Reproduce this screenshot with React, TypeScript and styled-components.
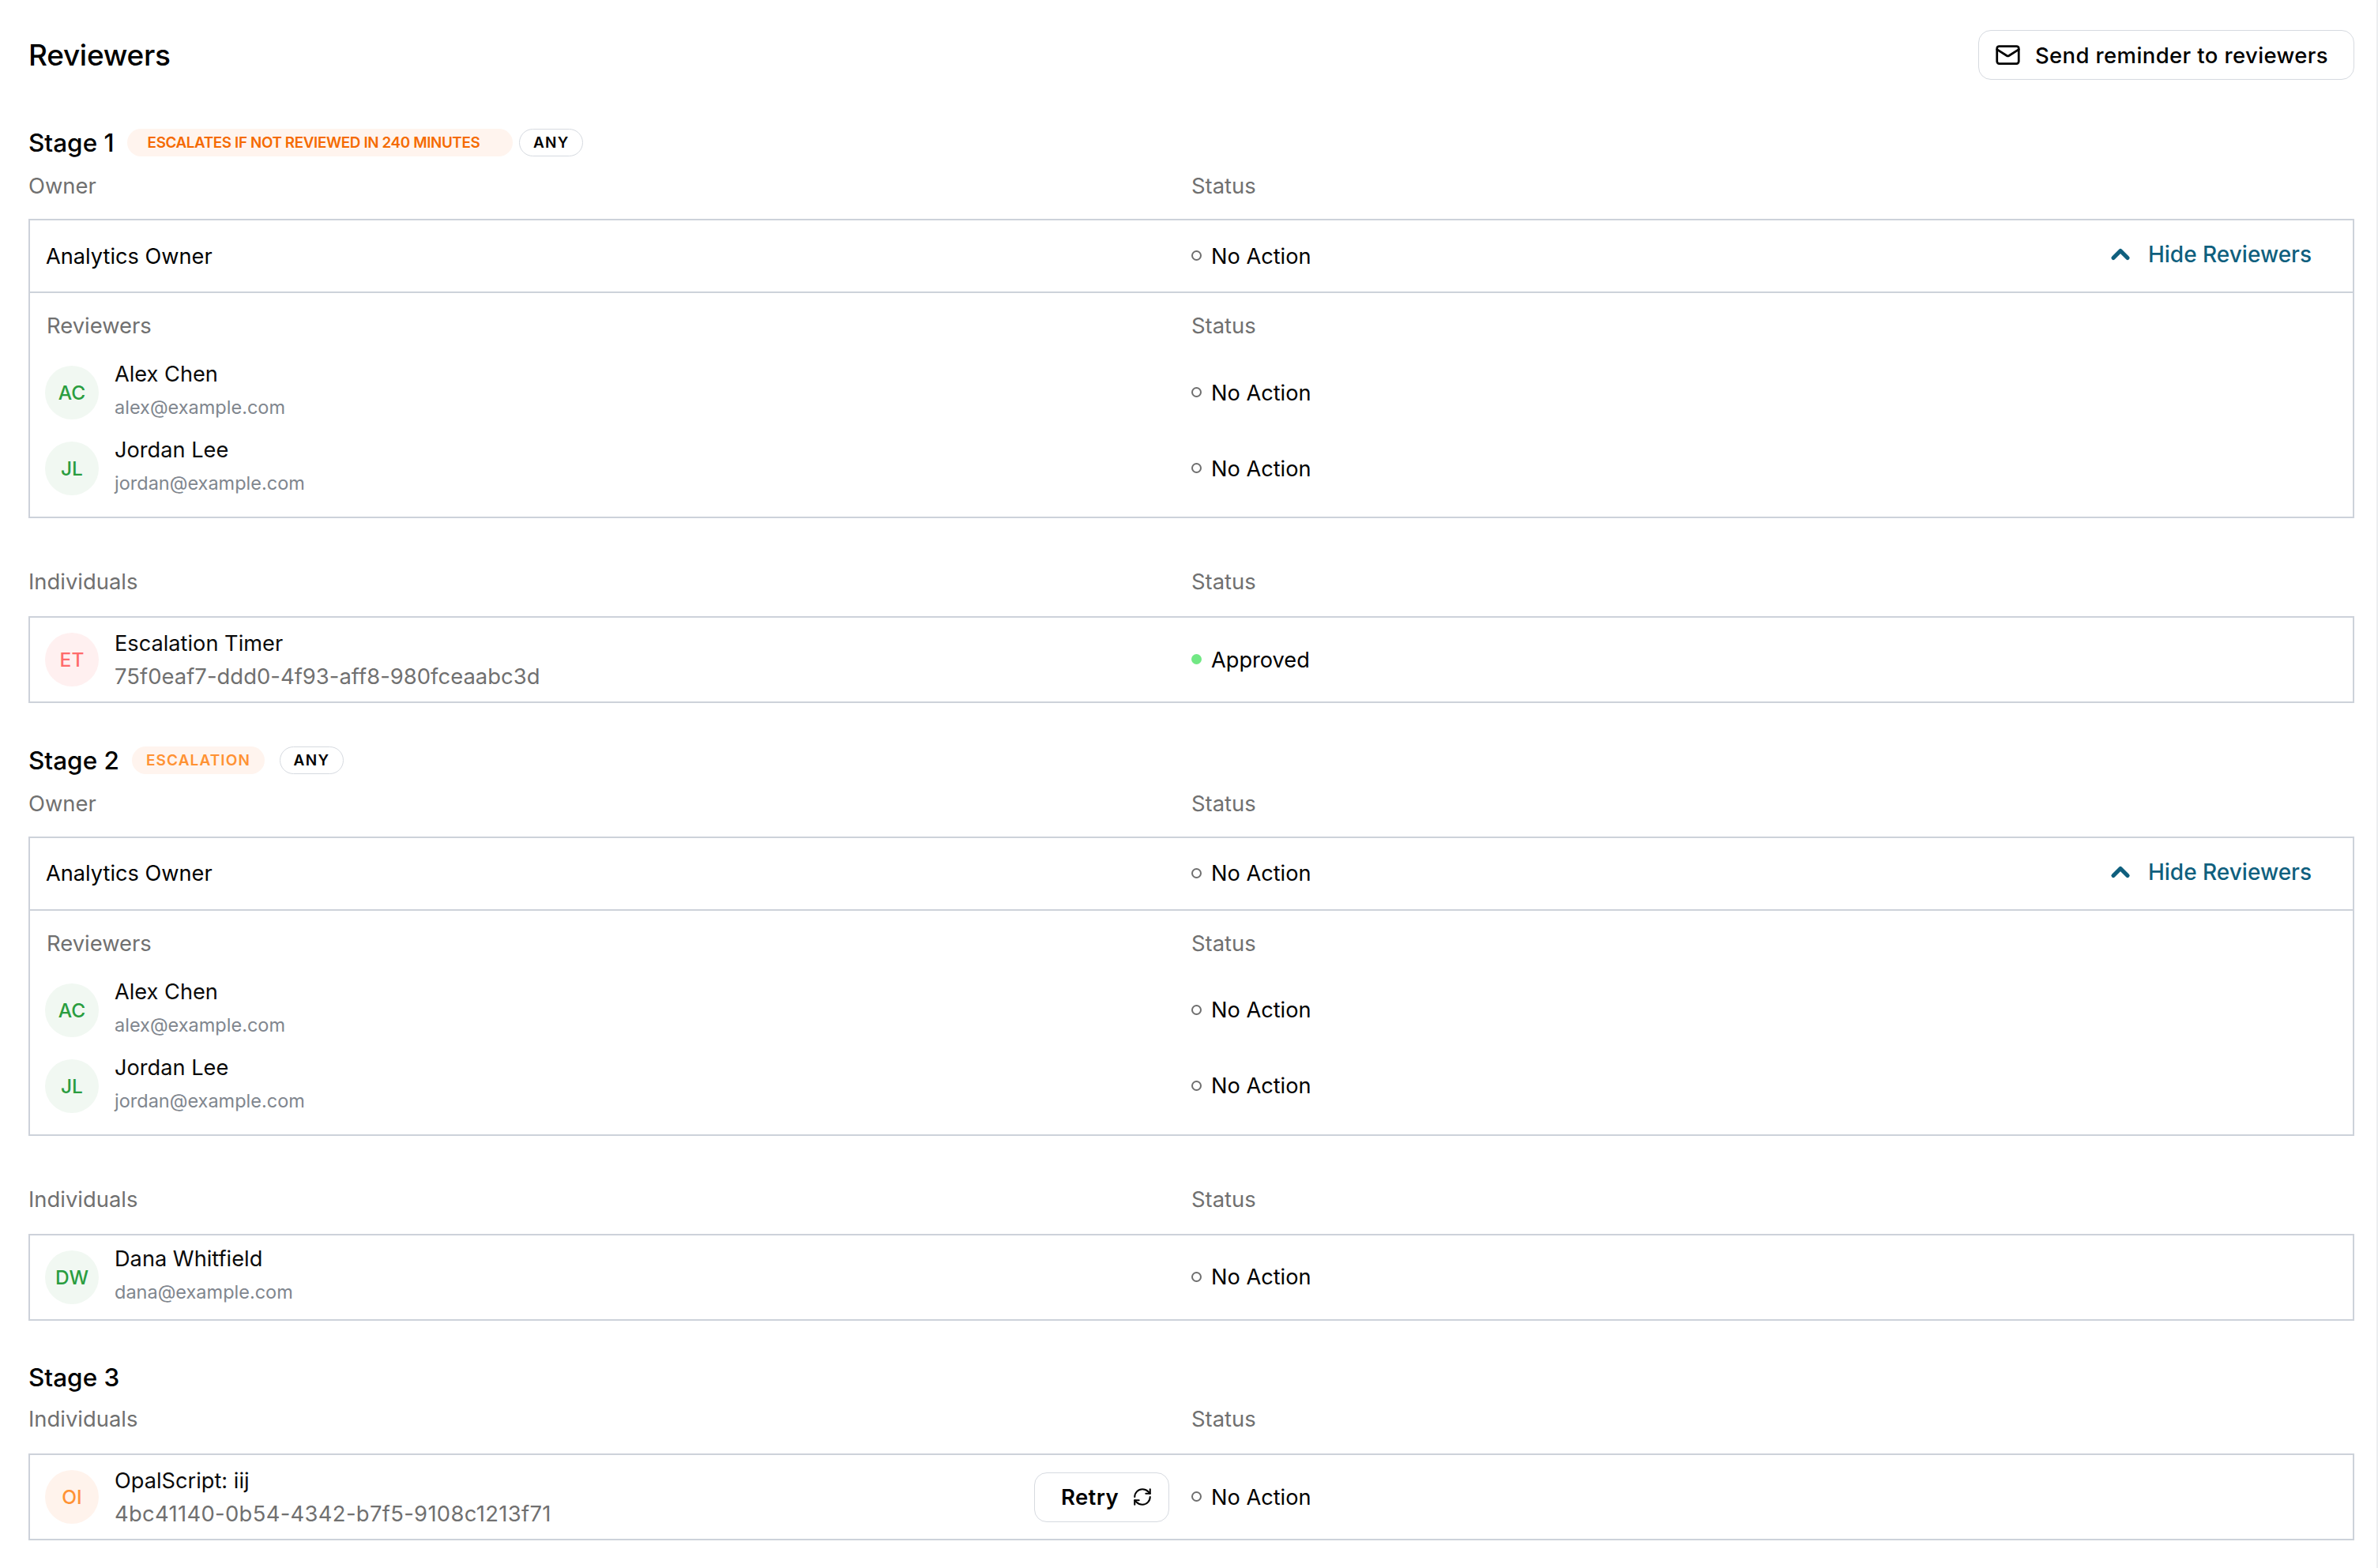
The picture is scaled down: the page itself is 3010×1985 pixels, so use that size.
import styled, { createGlobalStyle } from 'styled-components'
import { Mail, ChevronUp, RefreshCw } from 'lucide-react'

const GlobalStyle = createGlobalStyle`
  html, body { margin: 0; padding: 0; background: #fff; }
  body { font-family: Inter, "Liberation Sans", sans-serif; color: #0a0a0a; }
  * { box-sizing: border-box; }
`

const Page = styled.div`
  width: 3010px;
  height: 1985px;
  padding: 38px 28px 0 36px;
  border-right: 2px solid #eceef0;
  overflow: hidden;
`

const TopBar = styled.div`
  display: flex;
  align-items: center;
  justify-content: space-between;
  height: 63px;
  margin-bottom: 62px;
`

const Title = styled.h1`
  margin: 0;
  font-size: 37px;
  font-weight: 500;
  letter-spacing: -0.3px;
  color: #000;
`

const OutlineButton = styled.button`
  display: inline-flex;
  align-items: center;
  height: 63px;
  border: 1.5px solid #d6dae0;
  border-radius: 16px;
  background: #fff;
  color: #000;
  font-family: inherit;
  font-size: 27.5px;
  font-weight: 500;
  letter-spacing: 0.38px;
`

const SendButton = styled(OutlineButton)`
  gap: 18px;
  padding: 0 32px 0 20px;
`

const RetryButton = styled(OutlineButton)`
  gap: 17px;
  padding: 0 20px 0 33px;
  font-weight: 600;
`

const Stage = styled.section`
  margin-bottom: 54.5px;
`

const StageHead = styled.div`
  display: flex;
  align-items: center;
  height: 35px;
  margin-bottom: 21px;
`

const StageName = styled.h2`
  margin: 0 16px 0 0;
  font-size: 31.5px;
  font-weight: 500;
  color: #000;
`

const Pill = styled.span<{ $tone: 'deep' | 'soft' }>`
  display: inline-flex;
  align-items: center;
  height: 35px;
  border-radius: 18px;
  background: #fff4ee;
  font-weight: 600;
  font-size: ${p => (p.$tone === 'deep' ? '18.8px' : '19px')};
  margin-right: ${p => (p.$tone === 'deep' ? '8px' : '19px')};
  padding: ${p => (p.$tone === 'deep' ? '0 42px 0 26px' : '0 18px')};
  color: ${p => (p.$tone === 'deep' ? '#f56a00' : '#ff9233')};
  letter-spacing: ${p => (p.$tone === 'deep' ? '-0.35px' : '1.1px')};
`

const AnyPill = styled.span`
  display: inline-flex;
  align-items: center;
  justify-content: center;
  width: 81px;
  height: 35px;
  border: 1.5px solid #d6dae0;
  border-radius: 18px;
  font-size: 19px;
  font-weight: 600;
  letter-spacing: 1.3px;
  color: #000;
`

const Columns = styled.div<{ $gap: number }>`
  display: grid;
  grid-template-columns: 1472px 1fr;
  height: 34px;
  margin-bottom: ${p => p.$gap}px;
  font-size: 27.4px;
  line-height: 32px;
  color: #707070;
`

const Group = styled.div<{ $flush?: boolean }>`
  margin-top: ${p => (p.$flush ? '-2px' : '64px')};
`

const Box = styled.div`
  border: 2px solid #cdd2da;
`

const OwnerRow = styled.div`
  display: grid;
  grid-template-columns: 1470px 1fr;
  align-items: center;
  height: 92px;
  border-bottom: 2px solid #cdd2da;
`

const OwnerName = styled.div`
  padding-left: 20px;
  font-size: 27.2px;
  color: #000;
`

const StatusCell = styled.div`
  display: flex;
  align-items: center;
  justify-content: space-between;
  padding-right: 52px;
`

const Status = styled.div`
  display: flex;
  align-items: center;
  gap: 12px;
  font-size: 27.2px;
  color: #000;
`

const Dot = styled.span<{ $approved?: boolean }>`
  width: 13px;
  height: 13px;
  border-radius: 50%;
  margin-top: -1px;
  border: ${p => (p.$approved ? 'none' : '2.5px solid #6f6f6f')};
  background: ${p => (p.$approved ? '#71e884' : '#fff')};
`

const HideLink = styled.a`
  display: flex;
  align-items: center;
  gap: 17px;
  margin-top: -4px;
  font-size: 28px;
  font-weight: 500;
  color: #0f5f7e;
`

const ReviewerBlock = styled.div`
  padding: 25px 0 13px;
`

const ReviewerHead = styled.div`
  display: grid;
  grid-template-columns: 1470px 1fr;
  height: 34px;
  margin-bottom: 19px;
  font-size: 27.4px;
  line-height: 32px;
  color: #707070;

  & > :first-child {
    padding-left: 21px;
  }
`

const PersonRow = styled.div<{ $height: number }>`
  display: grid;
  grid-template-columns: 1470px 1fr;
  align-items: center;
  height: ${p => p.$height}px;
`

const PersonCell = styled.div`
  display: flex;
  align-items: center;
  padding: 0 28px 0 19px;
`

const Avatar = styled.div<{ $tone: 'green' | 'red' | 'orange' }>`
  display: flex;
  align-items: center;
  justify-content: center;
  flex: none;
  width: 68px;
  height: 68px;
  margin-right: 20px;
  border-radius: 50%;
  font-size: 24.5px;
  font-weight: 500;
  background: ${p => ({ green: '#f1f8f2', red: '#fff0f0', orange: '#fff3ec' }[p.$tone])};
  color: ${p => ({ green: '#2a9d3f', red: '#ff6b6b', orange: '#ff9233' }[p.$tone])};
`

const PersonText = styled.div`
  display: flex;
  flex-direction: column;
  flex: 1;
`

const PersonName = styled.div`
  font-size: 27.2px;
  line-height: 34px;
  color: #0a0a0a;
`

const Sub = styled.div<{ $id?: boolean; $tracking?: number }>`
  line-height: 34px;
  font-size: ${p => (p.$id ? '27.4px' : '23.5px')};
  letter-spacing: ${p => p.$tracking ?? 0}px;
  color: ${p => (p.$id ? '#707070' : '#80868e')};
  margin-top: ${p => (p.$id ? '7px' : '8px')};
  padding-bottom: ${p => (p.$id ? '0' : '4px')};
`

type Person = {
  initials: string
  tone: 'green' | 'red' | 'orange'
  name: string
  sub: string
  isId?: boolean
  tracking?: number
  approved?: boolean
  retry?: boolean
}

type StageData = {
  name: string
  pill?: { text: string; tone: 'deep' | 'soft' }
  owner?: boolean
  individual: Person
}

const reviewers: Person[] = [
  { initials: 'AC', tone: 'green', name: 'Alex Chen', sub: 'alex@example.com' },
  { initials: 'JL', tone: 'green', name: 'Jordan Lee', sub: 'jordan@example.com' },
]

const stages: StageData[] = [
  {
    name: 'Stage 1',
    pill: { text: 'ESCALATES IF NOT REVIEWED IN 240 MINUTES', tone: 'deep' },
    owner: true,
    individual: {
      initials: 'ET',
      tone: 'red',
      name: 'Escalation Timer',
      sub: '75f0eaf7-ddd0-4f93-aff8-980fceaabc3d',
      isId: true,
      tracking: 0.04,
      approved: true,
    },
  },
  {
    name: 'Stage 2',
    pill: { text: 'ESCALATION', tone: 'soft' },
    owner: true,
    individual: { initials: 'DW', tone: 'green', name: 'Dana Whitfield', sub: 'dana@example.com' },
  },
  {
    name: 'Stage 3',
    individual: {
      initials: 'OI',
      tone: 'orange',
      name: 'OpalScript: iij',
      sub: '4bc41140-0b54-4342-b7f5-9108c1213f71',
      isId: true,
      tracking: 0.32,
      retry: true,
    },
  },
]

const PersonLine = ({ person, height }: { person: Person; height: number }) => (
  <PersonRow $height={height}>
    <PersonCell>
      <Avatar $tone={person.tone}>{person.initials}</Avatar>
      <PersonText>
        <PersonName>{person.name}</PersonName>
        <Sub $id={person.isId} $tracking={person.tracking}>
          {person.sub}
        </Sub>
      </PersonText>
      {person.retry && (
        <RetryButton>
          Retry
          <RefreshCw size={26} strokeWidth={1.9} />
        </RetryButton>
      )}
    </PersonCell>
    <Status>
      <Dot $approved={person.approved} />
      {person.approved ? 'Approved' : 'No Action'}
    </Status>
  </PersonRow>
)

const App = () => (
  <Page>
    <GlobalStyle />
    <TopBar>
      <Title>Reviewers</Title>
      <SendButton>
        <Mail size={33} strokeWidth={2} />
        Send reminder to reviewers
      </SendButton>
    </TopBar>

    {stages.map(stage => (
      <Stage key={stage.name}>
        <StageHead>
          <StageName>{stage.name}</StageName>
          {stage.pill && <Pill $tone={stage.pill.tone}>{stage.pill.text}</Pill>}
          {stage.pill && <AnyPill>ANY</AnyPill>}
        </StageHead>

        {stage.owner && (
          <>
            <Columns $gap={24}>
              <span>Owner</span>
              <span>Status</span>
            </Columns>
            <Box>
              <OwnerRow>
                <OwnerName>Analytics Owner</OwnerName>
                <StatusCell>
                  <Status>
                    <Dot />
                    No Action
                  </Status>
                  <HideLink>
                    <ChevronUp size={36} strokeWidth={3.5} />
                    Hide Reviewers
                  </HideLink>
                </StatusCell>
              </OwnerRow>
              <ReviewerBlock>
                <ReviewerHead>
                  <span>Reviewers</span>
                  <span>Status</span>
                </ReviewerHead>
                {reviewers.map(r => (
                  <PersonLine key={r.name} person={r} height={96} />
                ))}
              </ReviewerBlock>
            </Box>
          </>
        )}

        <Group $flush={!stage.owner}>
          <Columns $gap={26}>
            <span>Individuals</span>
            <span>Status</span>
          </Columns>
          <Box>
            <PersonLine person={stage.individual} height={106} />
          </Box>
        </Group>
      </Stage>
    ))}
  </Page>
)

export default App
